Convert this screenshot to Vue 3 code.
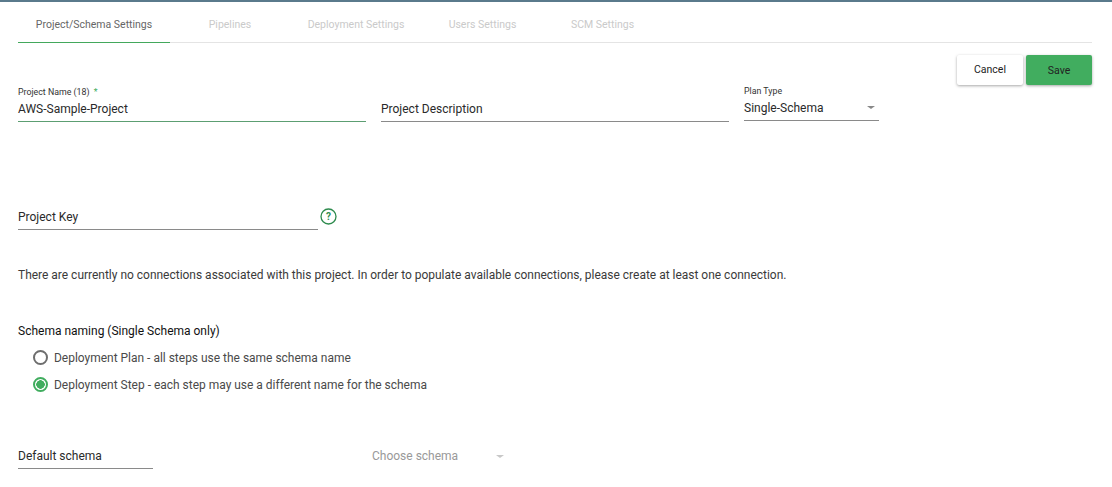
<script setup>
const tabs = [
  { label: 'Project/Schema Settings', width: 152, active: true },
  { label: 'Pipelines', width: 120 },
  { label: 'Deployment Settings', width: 132 },
  { label: 'Users Settings', width: 121 },
  { label: 'SCM Settings', width: 119 }
]
</script>

<template>
  <div class="page">
    <nav class="tabs">
      <div
        v-for="tab in tabs"
        :key="tab.label"
        class="tab"
        :class="{ active: tab.active }"
        :style="{ width: tab.width + 'px' }"
      >{{ tab.label }}</div>
    </nav>

    <div class="actions">
      <button class="btn cancel">Cancel</button>
      <button class="btn save">Save</button>
    </div>

    <div class="row-top">
      <div class="field name">
        <label class="small">Project Name (18) <span class="req">*</span></label>
        <div class="value green-line">AWS-Sample-Project</div>
      </div>
      <div class="field desc">
        <label class="small">&nbsp;</label>
        <div class="value">Project Description</div>
      </div>
      <div class="field plan">
        <label class="small">Plan Type</label>
        <div class="value select">Single-Schema<span class="caret"></span></div>
      </div>
    </div>

    <div class="row-key">
      <div class="value key">Project Key</div>
      <svg class="help" width="17" height="17" viewBox="0 0 17 17">
        <circle cx="8.5" cy="8.5" r="7.5" fill="none" stroke="#2e8b4e" stroke-width="1.3" />
        <text x="8.5" y="12" text-anchor="middle" font-size="10" font-weight="700" fill="#2e8b4e" font-family="Roboto, sans-serif">?</text>
      </svg>
    </div>

    <p class="notice">There are currently no connections associated with this project. In order to populate available connections, please create at least one connection.</p>

    <h3 class="section">Schema naming (Single Schema only)</h3>
    <div class="radio">
      <span class="dot"></span>
      <span>Deployment Plan - all steps use the same schema name</span>
    </div>
    <div class="radio">
      <span class="dot on"></span>
      <span>Deployment Step - each step may use a different name for the schema</span>
    </div>

    <div class="row-schema">
      <div class="value default">Default schema</div>
      <div class="choose">Choose schema<span class="caret light"></span></div>
    </div>
  </div>
</template>

<style>
html, body { margin: 0; background: #fff; overflow: hidden; }
</style>

<style scoped>
.page {
  position: relative;
  width: 1112px;
  height: 487px;
  box-sizing: border-box;
  border-top: 2px solid #5a7a8c;
  padding: 0 20px 0 18px;
  font-family: Roboto, "Liberation Sans", sans-serif;
  color: #212121;
  overflow: hidden;
}
.tabs {
  display: flex;
  height: 40px;
  border-bottom: 1px solid #e4e4e4;
}
.tab {
  box-sizing: border-box;
  height: 41px;
  padding-top: 16px;
  text-align: center;
  font-size: 10.5px;
  line-height: 13px;
  color: #cacaca;
  white-space: nowrap;
}
.tab.active {
  color: #666;
  border-bottom: 1px solid #43a85c;
}
.actions {
  position: absolute;
  top: 53px;
  right: 20px;
  display: flex;
  gap: 3px;
}
.btn {
  width: 66px;
  height: 30px;
  border: 0;
  border-radius: 2px;
  font: 10.5px Roboto, sans-serif;
  color: #222;
  box-shadow: 0 1px 3px rgba(0, 0, 0, .35);
}
.cancel { background: #fff; padding-bottom: 2px; }
.save { background: #41ad5f; }
.row-top {
  display: flex;
  margin-top: 44px;
}
.field { display: flex; flex-direction: column; }
.name { width: 348px; margin-right: 15px; }
.desc { width: 348px; margin-right: 15px; }
.plan { width: 135px; margin-top: -1px; }
.small {
  height: 10px;
  font-size: 8.8px;
  line-height: 10px;
  color: #333;
}
.req { color: #41ad5f; margin-left: 2px; }
.value {
  box-sizing: border-box;
  height: 25px;
  padding-top: 5px;
  font-size: 12px;
  line-height: 15px;
  color: #2a2a2a;
  border-bottom: 1px solid #8a8a8a;
  white-space: nowrap;
}
.green-line { border-bottom-color: #5c9e72; }
.select { position: relative; }
.caret {
  position: absolute;
  right: 4px;
  top: 10px;
  width: 0;
  height: 0;
  border-left: 4px solid transparent;
  border-right: 4px solid transparent;
  border-top: 3.5px solid #888;
}
.caret.light { border-top-color: #c8c8c8; right: 0; top: 5px; }
.row-key {
  display: flex;
  align-items: flex-start;
  gap: 2px;
  margin-top: 83px;
}
.key { width: 300px; }
.help { margin-top: 3px; }
.notice {
  margin: 38px 0 0;
  font-size: 11.98px;
  line-height: 15px;
  color: #3a3a3a;
  white-space: nowrap;
}
.section {
  margin: 41px 0 0;
  font-size: 12px;
  line-height: 15px;
  font-weight: 400;
  color: #111;
}
.radio {
  display: flex;
  align-items: center;
  gap: 6px;
  height: 15px;
  margin: 12px 0 0 15px;
  font-size: 11.98px;
  color: #4a4a4a;
  white-space: nowrap;
}
.section + .radio { margin-top: 11px; }
.dot {
  box-sizing: border-box;
  width: 15px;
  height: 15px;
  border: 2px solid #6e6e6e;
  border-radius: 50%;
  background: #fff;
}
.dot.on {
  border-color: #41ad5f;
  background: radial-gradient(circle, #41ad5f 0 4px, #fff 4.5px);
}
.row-schema {
  display: flex;
  margin-top: 52px;
}
.default { width: 135px; }
.choose {
  position: relative;
  width: 132px;
  margin-left: 219px;
  padding-top: 5px;
  font-size: 12px;
  line-height: 15px;
  color: #999;
}
.choose .caret { top: 11px; }
</style>
